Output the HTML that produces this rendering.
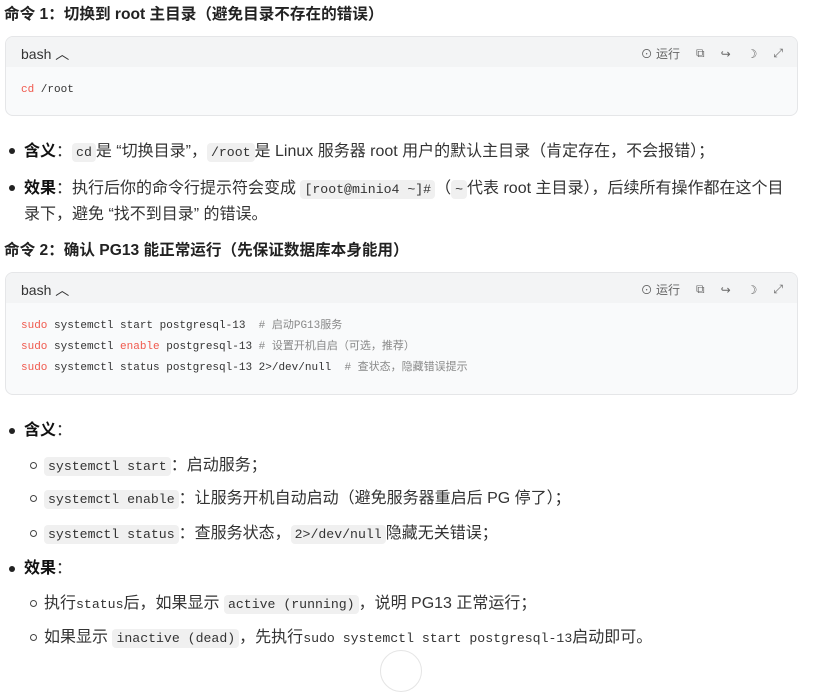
<!DOCTYPE html><html><head><meta charset="utf-8"><style>
body{margin:0;background:#fff;font-family:"Liberation Sans","Noto Sans CJK SC",sans-serif;color:#222;width:835px;height:666px;overflow:hidden;position:relative}
.a{position:absolute;white-space:nowrap;margin-top:-3px}
h3{position:absolute;margin:0;font-size:15.6px;font-weight:bold;left:4px}
.blk{position:absolute;left:5px;width:791px;border:1px solid #e5e6e8;border-radius:8px;background:#f9fafb;overflow:hidden}
.hd{height:30px;background:#f3f4f5;position:relative}
.hd .l{position:absolute;left:15px;top:7px;font-size:14px;color:#333}
.hd .r{position:absolute;right:14px;top:8px;font-size:12px;color:#666;display:flex;gap:16px;align-items:center}
pre{margin:0;font-family:"Liberation Mono",monospace;font-size:11px;line-height:21px;color:#333;padding:0 15px;white-space:pre}
.k{color:#f0584c}.c{color:#888;font-family:"Liberation Mono","Noto Sans CJK SC",monospace}
.t{font-size:16px;color:#333}
code{font-family:"Liberation Mono",monospace;font-size:13.2px;background:#f0f0f0;border-radius:4px;padding:2px 4px}
b{color:#111}
.dot{position:absolute;width:6px;height:6px;border-radius:50%;background:#222}
.cir{position:absolute;width:5px;height:5px;border-radius:50%;border:1px solid #444}
</style></head><body>
<h3 style="top:2px">命令 1：切换到 root 主目录（避免目录不存在的错误）</h3>
<div class="blk" style="top:36px;height:78px"><div class="hd"><span class="l">bash ︿</span><span class="r"><span>⊙ 运行</span><span>⧉</span><span>↪</span><span>☽</span><span>⤢</span></span></div>
<pre style="padding-top:13px"><span class="k">cd</span> /root</pre></div>
<div class="dot" style="left:9px;top:148px"></div>
<div class="a t" style="left:24px;top:140px"><b>含义</b>：<code>cd</code>是 “切换目录”，<code>/root</code>是 Linux 服务器 root 用户的默认主目录（肯定存在，不会报错）；</div>
<div class="dot" style="left:9px;top:185px"></div>
<div class="a t" style="left:24px;top:177px"><b>效果</b>：执行后你的命令行提示符会变成 <code>[root@minio4 ~]#</code>（<code>~</code>代表 root 主目录），后续所有操作都在这个目</div>
<div class="a t" style="left:24px;top:203px">录下，避免 “找不到目录” 的错误。</div>
<h3 style="top:238px">命令 2：确认 PG13 能正常运行（先保证数据库本身能用）</h3>
<div class="blk" style="top:272px;height:121px"><div class="hd"><span class="l">bash ︿</span><span class="r"><span>⊙ 运行</span><span>⧉</span><span>↪</span><span>☽</span><span>⤢</span></span></div>
<pre style="padding-top:13px"><span class="k">sudo</span> systemctl start postgresql-13  <span class="c"># 启动PG13服务</span>
<span class="k">sudo</span> systemctl <span class="k">enable</span> postgresql-13 <span class="c"># 设置开机自启（可选，推荐）</span>
<span class="k">sudo</span> systemctl status postgresql-13 2>/dev/null  <span class="c"># 查状态，隐藏错误提示</span></pre></div>
<div class="dot" style="left:9px;top:428px"></div>
<div class="a t" style="left:24px;top:419px"><b>含义</b>：</div>
<div class="cir" style="left:30px;top:462px"></div>
<div class="a t" style="left:44px;top:454px"><code>systemctl start</code>：启动服务；</div>
<div class="cir" style="left:30px;top:495px"></div>
<div class="a t" style="left:44px;top:487px"><code>systemctl enable</code>：让服务开机自动启动（避免服务器重启后 PG 停了）；</div>
<div class="cir" style="left:30px;top:530px"></div>
<div class="a t" style="left:44px;top:522px"><code>systemctl status</code>：查服务状态，<code>2>/dev/null</code>隐藏无关错误；</div>
<div class="dot" style="left:9px;top:566px"></div>
<div class="a t" style="left:24px;top:557px"><b>效果</b>：</div>
<div class="cir" style="left:30px;top:600px"></div>
<div class="a t" style="left:44px;top:592px">执行<code style="background:none;padding:0">status</code>后，如果显示 <code>active (running)</code>，说明 PG13 正常运行；</div>
<div class="cir" style="left:30px;top:634px"></div>
<div class="a t" style="left:44px;top:626px">如果显示 <code>inactive (dead)</code>，先执行<code style="background:none;padding:0">sudo systemctl start postgresql-13</code>启动即可。</div>
<div style="position:absolute;left:380px;top:650px;width:40px;height:40px;border-radius:50%;border:1px solid #e5e5e5;background:#fff"></div>
</body></html>
